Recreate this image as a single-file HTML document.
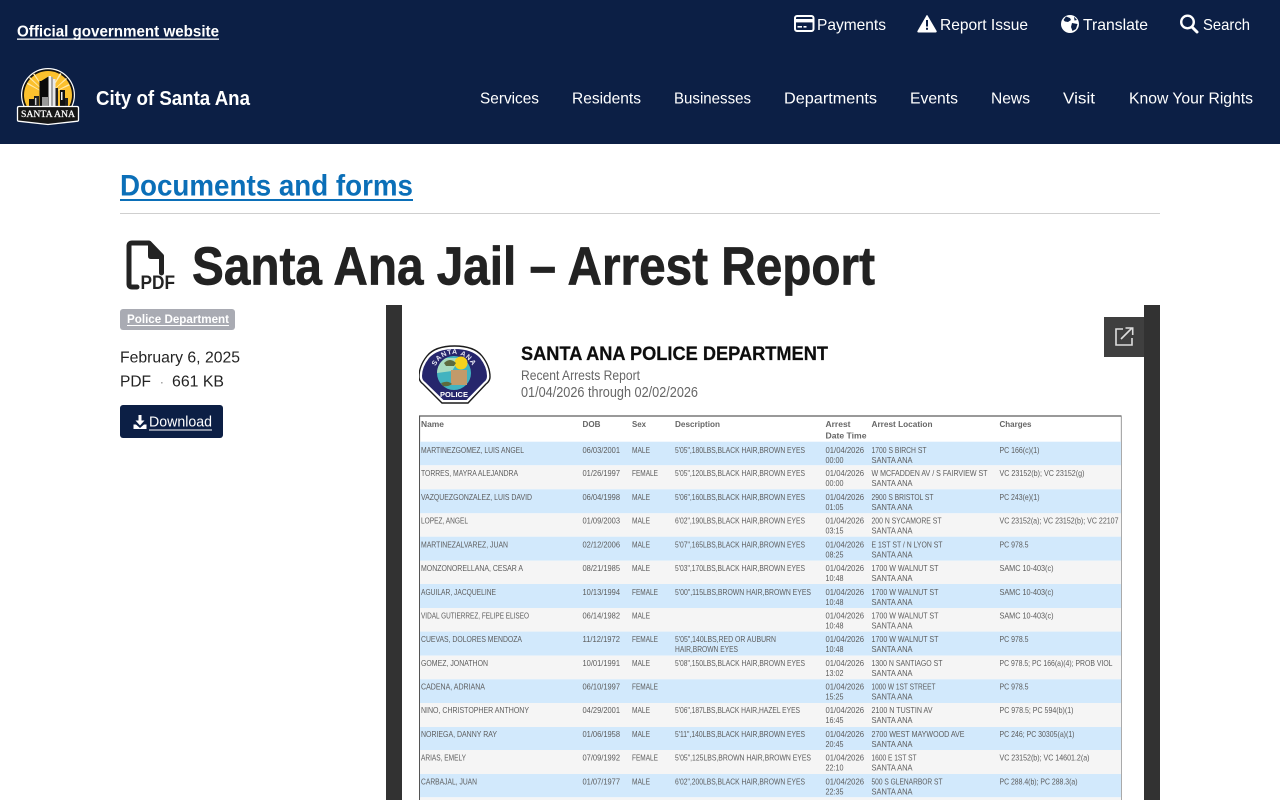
<!DOCTYPE html>
<html lang="en">
<head>
<meta charset="utf-8">
<title>Santa Ana Jail – Arrest Report</title>
<style>
html,body{margin:0;padding:0;background:#fff;width:1280px;height:800px;overflow:hidden}
svg{display:block;position:absolute;left:0;top:0}
text{font-family:"Liberation Sans",sans-serif}
.w{fill:#fff;font-size:16px}
.b{font-weight:700}
.d{fill:#232323;font-size:16px}
#rows text{font-size:8.4px;fill:#5c5c5c}
.h{font-size:8.4px;font-weight:700;fill:#666}
</style>
</head>
<body>
<svg width="1280" height="800" viewBox="0 0 1280 800" xmlns="http://www.w3.org/2000/svg">
<defs>
<filter id="soft" x="0" y="0" width="100%" height="100%"><feGaussianBlur stdDeviation="0.32"/></filter>
<path id="arc" d="M434 374 A20 20 0 0 1 474 374"/>
</defs>

<!-- header -->
<rect x="0" y="0" width="1280" height="144" fill="#0c1f45"/>
<a href="#"><text class="w b" x="17" y="36.5" textLength="202" lengthAdjust="spacingAndGlyphs">Official government website</text></a>
<rect x="17" y="38.5" width="202" height="1.3" fill="#fff"/>

<!-- utility nav -->
<rect x="795" y="16" width="18.5" height="15" rx="2" fill="none" stroke="#fff" stroke-width="2"/>
<rect x="795" y="19" width="18" height="3.4" fill="#fff"/>
<rect x="797.5" y="26" width="4.5" height="1.6" fill="#fff"/><rect x="803.5" y="26" width="3" height="1.6" fill="#fff"/>
<a href="#"><text class="w" x="817" y="30" textLength="69" lengthAdjust="spacingAndGlyphs">Payments</text></a>

<path d="M927 15.5 L936.2 31.2 Q936.4 32 935.5 32 L918.5 32 Q917.6 32 917.9 31.2 Z" fill="#fff" stroke="#fff" stroke-linejoin="round"/>
<rect x="926" y="20" width="2" height="6.5" fill="#0c1f45"/><rect x="926" y="27.8" width="2" height="2" fill="#0c1f45"/>
<a href="#"><text class="w" x="940" y="30" textLength="88" lengthAdjust="spacingAndGlyphs">Report Issue</text></a>

<circle cx="1070" cy="24" r="9" fill="#fff"/>
<path d="M1066 16.5 L1070 18 L1071 20 L1068 22 L1065 21.5 L1063.5 20 Z M1072 23 L1077.5 24 L1076 29 L1072.5 31 L1071 27 Z M1074 16.8 L1077 20 L1074.5 20.5 Z" fill="#0c1f45"/>
<a href="#"><text class="w" x="1083" y="30" textLength="65" lengthAdjust="spacingAndGlyphs">Translate</text></a>

<circle cx="1187.5" cy="22" r="6.3" fill="none" stroke="#fff" stroke-width="2.4"/>
<path d="M1192 27 L1197 32" stroke="#fff" stroke-width="3" stroke-linecap="round"/>
<a href="#"><text class="w" x="1203" y="30" textLength="47" lengthAdjust="spacingAndGlyphs">Search</text></a>

<!-- logo -->
<circle cx="48" cy="95" r="27" fill="#fff"/>
<circle cx="48" cy="95" r="25.8" fill="#111"/>
<circle cx="48" cy="95" r="24" fill="#fbc02d"/>
<path d="M48 95 L33 74 L34.5 73.5 Z M48 95 L60 73 L61.5 74 Z M48 95 L27 84 L27.5 82.5 Z M48 95 L69 84 L69.5 85.5 Z M48 95 L66 78 L67 79 Z M48 95 L29 78 L30 77 Z" fill="#ffe9a8"/>
<rect x="39.5" y="81" width="9" height="26" fill="#0b0b0b"/>
<path d="M39.5 82 L48.5 76.5 L48.5 84 L39.5 84 Z" fill="#0b0b0b"/>
<rect x="48.5" y="76" width="2.5" height="31" fill="#f2f2f2"/>
<rect x="51" y="77" width="2" height="30" fill="#a5a5a5"/>
<rect x="53" y="79" width="2.5" height="28" fill="#e8e8e8"/>
<rect x="55.5" y="88" width="2.5" height="19" fill="#222"/>
<rect x="60" y="90" width="5" height="17" fill="#111"/>
<rect x="61" y="92" width="1.5" height="8" fill="#eee"/>
<rect x="65" y="98" width="3" height="9" fill="#222"/>
<rect x="29" y="99" width="5" height="8" fill="#111"/>
<rect x="34" y="96" width="5" height="11" fill="#222"/>
<rect x="35" y="98" width="1.4" height="7" fill="#ccc"/>
<rect x="42" y="97" width="6" height="10" fill="#999"/>
<path d="M19 106.5 L77 106.5 Q78.5 106.5 78.5 108 L78.5 120 Q78.5 121 77.5 121.2 L48 124.5 L18.5 121.2 Q17.5 121 17.5 120 L17.5 108 Q17.5 106.5 19 106.5 Z" fill="#161616" stroke="#fff" stroke-width="1.3"/>
<text x="48" y="117" text-anchor="middle" textLength="54" lengthAdjust="spacingAndGlyphs" style="font-family:'Liberation Serif',serif;font-size:9.5px;fill:#fff;stroke:#fff;stroke-width:.25px">SANTA ANA</text>
<a href="#"><text class="w b" x="96" y="105" style="font-size:20px" textLength="154" lengthAdjust="spacingAndGlyphs">City of Santa Ana</text></a>

<!-- main nav -->
<a href="#"><text class="w" x="480" y="103.5" textLength="59" lengthAdjust="spacingAndGlyphs">Services</text></a>
<a href="#"><text class="w" x="572" y="103.5" textLength="69" lengthAdjust="spacingAndGlyphs">Residents</text></a>
<a href="#"><text class="w" x="674" y="103.5" textLength="77" lengthAdjust="spacingAndGlyphs">Businesses</text></a>
<a href="#"><text class="w" x="784" y="103.5" textLength="93" lengthAdjust="spacingAndGlyphs">Departments</text></a>
<a href="#"><text class="w" x="910" y="103.5" textLength="48" lengthAdjust="spacingAndGlyphs">Events</text></a>
<a href="#"><text class="w" x="991" y="103.5" textLength="39" lengthAdjust="spacingAndGlyphs">News</text></a>
<a href="#"><text class="w" x="1063" y="103.5" textLength="32" lengthAdjust="spacingAndGlyphs">Visit</text></a>
<a href="#"><text class="w" x="1129" y="103.5" textLength="124" lengthAdjust="spacingAndGlyphs">Know Your Rights</text></a>

<!-- breadcrumb -->
<a href="#"><text x="120" y="195.5" style="font-size:30px;font-weight:700;fill:#0b6fb8" textLength="293" lengthAdjust="spacingAndGlyphs">Documents and forms</text></a>
<rect x="120" y="199" width="293" height="2" fill="#0b6fb8"/>
<rect x="120" y="213" width="1040" height="1" fill="#cfcfcf"/>

<!-- title -->
<path d="M137 287 L132 287 Q129 287 129 284 L129 246 Q129 243 132 243 L149 243 L161.5 256 L161.5 273" fill="none" stroke="#232323" stroke-width="5" stroke-linecap="round" stroke-linejoin="round"/>
<path d="M148 241 L164 257 L164 259 L151 259 Q148 259 148 256 Z" fill="#232323"/>
<text x="140.5" y="289" style="font-size:19.5px;font-weight:700;fill:#232323" textLength="34.5" lengthAdjust="spacingAndGlyphs">PDF</text>
<text x="192" y="284.5" style="font-size:54px;font-weight:700;fill:#222;stroke:#222;stroke-width:.7px" textLength="683" lengthAdjust="spacingAndGlyphs">Santa Ana Jail – Arrest Report</text>

<!-- sidebar -->
<rect x="120" y="309" width="115" height="21" rx="3" fill="#a9abb3"/>
<a href="#"><text x="127" y="323" style="font-size:12px;font-weight:700;fill:#fff" textLength="102" lengthAdjust="spacingAndGlyphs">Police Department</text></a>
<rect x="127" y="325" width="102" height="1" fill="#fff"/>
<text class="d" x="120" y="362.5" textLength="120" lengthAdjust="spacingAndGlyphs">February 6, 2025</text>
<text class="d" x="120" y="386.5" textLength="31" lengthAdjust="spacingAndGlyphs">PDF</text>
<text x="159.5" y="386.5" style="font-size:14px;fill:#999">·</text>
<text class="d" x="172" y="386.5" textLength="52" lengthAdjust="spacingAndGlyphs">661 KB</text>
<rect x="120" y="405" width="103" height="33" rx="3" fill="#0c1f45"/>
<path d="M138.5 415 L141.5 415 L141.5 420.5 L144.5 420.5 L140 425.5 L135.5 420.5 L138.5 420.5 Z" fill="#fff"/>
<path d="M133.5 424.5 L136 424.5 L140 428 L144 424.5 L146.5 424.5 L146.5 429 L133.5 429 Z" fill="#fff"/>
<a href="#"><text x="149" y="426.5" style="font-size:15px;fill:#fff" textLength="63" lengthAdjust="spacingAndGlyphs">Download</text></a>
<rect x="149" y="429.5" width="63" height="1" fill="#fff"/>

<!-- viewer -->
<rect x="386" y="305" width="774" height="495" fill="#323232"/>
<rect x="402" y="305" width="742" height="495" fill="#fff"/>

<g filter="url(#soft)">
<!-- police badge -->
<path d="M454.5 346 Q474 346 482 356 Q490 366 490 377 Q490 381 486 384 L468 403 L442 403 L423 384 Q419 381 419 377 Q419 366 427 356 Q435 346 454.5 346 Z" fill="#fff" stroke="#1a1a1a" stroke-width="1.4"/>
<path d="M454.5 349 Q472 349 480 358 Q487 367 487 376 Q487 380 484 382 L466.5 400 L443.5 400 L425 382 Q422 380 422 376 Q422 367 429 358 Q437 349 454.5 349 Z" fill="#28286c"/>
<circle cx="454" cy="373" r="17" fill="#43b3c0"/>
<path d="M437 373 A17 17 0 0 1 446 358 L460 358 L452 371 Z" fill="#a8dbc0"/>
<circle cx="461" cy="363" r="6.5" fill="#f6d21f"/>
<rect x="451" y="370" width="16" height="15" fill="#c29a6b"/>
<path d="M444 363 Q450 357 456 363 L454 366 L446 366 Z" fill="#5d6a3c"/>
<path d="M441 383 Q448 380 452 384 Q448 387 443 386 Z" fill="#5d6a3c"/>
<text text-anchor="middle" style="font-size:7px;font-weight:700;fill:#e8e8f4;letter-spacing:.7px"><textPath href="#arc" startOffset="50%">SANTA ANA</textPath></text>
<text x="440" y="397" style="font-size:7.5px;font-weight:700;fill:#fff" textLength="28" lengthAdjust="spacingAndGlyphs">POLICE</text>

<text x="521" y="360" style="font-size:19px;font-weight:700;fill:#111;stroke:#111;stroke-width:.25px" textLength="307" lengthAdjust="spacingAndGlyphs">SANTA ANA POLICE DEPARTMENT</text>
<text x="521" y="380" style="font-size:14px;fill:#666" textLength="119" lengthAdjust="spacingAndGlyphs">Recent Arrests Report</text>
<text x="521" y="397" style="font-size:14.5px;fill:#666" textLength="177" lengthAdjust="spacingAndGlyphs">01/04/2026 through 02/02/2026</text>

<!-- table -->
<rect x="419.5" y="416" width="702" height="390" fill="#fff" stroke="#555" stroke-width="1.2"/>
<text class="h" x="421" y="427" textLength="23" lengthAdjust="spacingAndGlyphs">Name</text>
<text class="h" x="582.5" y="427" textLength="18" lengthAdjust="spacingAndGlyphs">DOB</text>
<text class="h" x="632" y="427" textLength="14" lengthAdjust="spacingAndGlyphs">Sex</text>
<text class="h" x="675" y="427" textLength="45" lengthAdjust="spacingAndGlyphs">Description</text>
<text class="h" x="825.5" y="427" textLength="25" lengthAdjust="spacingAndGlyphs">Arrest</text>
<text class="h" x="825.5" y="438.5" textLength="41" lengthAdjust="spacingAndGlyphs">Date Time</text>
<text class="h" x="871.5" y="427" textLength="61" lengthAdjust="spacingAndGlyphs">Arrest Location</text>
<text class="h" x="999.5" y="427" textLength="32" lengthAdjust="spacingAndGlyphs">Charges</text>

<g id="rows">
<rect x="420" y="441.7" width="701" height="23.6" fill="#d2e9fc"/>
<rect x="420" y="465.3" width="701" height="24" fill="#f5f5f5"/>
<rect x="420" y="489.3" width="701" height="24" fill="#d2e9fc"/>
<rect x="420" y="513.3" width="701" height="23.4" fill="#f5f5f5"/>
<rect x="420" y="536.7" width="701" height="24" fill="#d2e9fc"/>
<rect x="420" y="560.7" width="701" height="23.3" fill="#f5f5f5"/>
<rect x="420" y="584" width="701" height="24" fill="#d2e9fc"/>
<rect x="420" y="608" width="701" height="23.6" fill="#f5f5f5"/>
<rect x="420" y="631.6" width="701" height="24" fill="#d2e9fc"/>
<rect x="420" y="655.6" width="701" height="23.7" fill="#f5f5f5"/>
<rect x="420" y="679.3" width="701" height="23.7" fill="#d2e9fc"/>
<rect x="420" y="703" width="701" height="24" fill="#f5f5f5"/>
<rect x="420" y="727" width="701" height="23" fill="#d2e9fc"/>
<rect x="420" y="750" width="701" height="24" fill="#f5f5f5"/>
<rect x="420" y="774" width="701" height="23.3" fill="#d2e9fc"/>
<rect x="420" y="797.3" width="701" height="3" fill="#f5f5f5"/>

<g transform="translate(0,453)">
<text x="421" textLength="103" lengthAdjust="spacingAndGlyphs">MARTINEZGOMEZ, LUIS ANGEL</text><text x="582.5" textLength="37.5" lengthAdjust="spacingAndGlyphs">06/03/2001</text><text x="632" textLength="18" lengthAdjust="spacingAndGlyphs">MALE</text><text x="675" textLength="130" lengthAdjust="spacingAndGlyphs">5'05",180LBS,BLACK HAIR,BROWN EYES</text><text x="825.5" textLength="38.5" lengthAdjust="spacingAndGlyphs">01/04/2026</text><text x="825.5" y="10" textLength="18" lengthAdjust="spacingAndGlyphs">00:00</text><text x="871.5" textLength="55" lengthAdjust="spacingAndGlyphs">1700 S BIRCH ST</text><text x="871.5" y="10" textLength="41" lengthAdjust="spacingAndGlyphs">SANTA ANA</text><text x="999.5" textLength="40" lengthAdjust="spacingAndGlyphs">PC 166(c)(1)</text>
</g>
<g transform="translate(0,476)">
<text x="421" textLength="97" lengthAdjust="spacingAndGlyphs">TORRES, MAYRA ALEJANDRA</text><text x="582.5" textLength="37.5" lengthAdjust="spacingAndGlyphs">01/26/1997</text><text x="632" textLength="26" lengthAdjust="spacingAndGlyphs">FEMALE</text><text x="675" textLength="130" lengthAdjust="spacingAndGlyphs">5'05",120LBS,BLACK HAIR,BROWN EYES</text><text x="825.5" textLength="38.5" lengthAdjust="spacingAndGlyphs">01/04/2026</text><text x="825.5" y="10" textLength="18" lengthAdjust="spacingAndGlyphs">00:00</text><text x="871.5" textLength="116" lengthAdjust="spacingAndGlyphs">W MCFADDEN AV / S FAIRVIEW ST</text><text x="871.5" y="10" textLength="41" lengthAdjust="spacingAndGlyphs">SANTA ANA</text><text x="999.5" textLength="85" lengthAdjust="spacingAndGlyphs">VC 23152(b); VC 23152(g)</text>
</g>
<g transform="translate(0,500)">
<text x="421" textLength="111" lengthAdjust="spacingAndGlyphs">VAZQUEZGONZALEZ, LUIS DAVID</text><text x="582.5" textLength="37.5" lengthAdjust="spacingAndGlyphs">06/04/1998</text><text x="632" textLength="18" lengthAdjust="spacingAndGlyphs">MALE</text><text x="675" textLength="130" lengthAdjust="spacingAndGlyphs">5'06",160LBS,BLACK HAIR,BROWN EYES</text><text x="825.5" textLength="38.5" lengthAdjust="spacingAndGlyphs">01/04/2026</text><text x="825.5" y="10" textLength="18" lengthAdjust="spacingAndGlyphs">01:05</text><text x="871.5" textLength="62" lengthAdjust="spacingAndGlyphs">2900 S BRISTOL ST</text><text x="871.5" y="10" textLength="41" lengthAdjust="spacingAndGlyphs">SANTA ANA</text><text x="999.5" textLength="40" lengthAdjust="spacingAndGlyphs">PC 243(e)(1)</text>
</g>
<g transform="translate(0,523.5)">
<text x="421" textLength="47" lengthAdjust="spacingAndGlyphs">LOPEZ, ANGEL</text><text x="582.5" textLength="37.5" lengthAdjust="spacingAndGlyphs">01/09/2003</text><text x="632" textLength="18" lengthAdjust="spacingAndGlyphs">MALE</text><text x="675" textLength="130" lengthAdjust="spacingAndGlyphs">6'02",190LBS,BLACK HAIR,BROWN EYES</text><text x="825.5" textLength="38.5" lengthAdjust="spacingAndGlyphs">01/04/2026</text><text x="825.5" y="10" textLength="18" lengthAdjust="spacingAndGlyphs">03:15</text><text x="871.5" textLength="70" lengthAdjust="spacingAndGlyphs">200 N SYCAMORE ST</text><text x="871.5" y="10" textLength="41" lengthAdjust="spacingAndGlyphs">SANTA ANA</text><text x="999.5" textLength="119" lengthAdjust="spacingAndGlyphs">VC 23152(a); VC 23152(b); VC 22107</text>
</g>
<g transform="translate(0,547.5)">
<text x="421" textLength="87" lengthAdjust="spacingAndGlyphs">MARTINEZALVAREZ, JUAN</text><text x="582.5" textLength="37.5" lengthAdjust="spacingAndGlyphs">02/12/2006</text><text x="632" textLength="18" lengthAdjust="spacingAndGlyphs">MALE</text><text x="675" textLength="130" lengthAdjust="spacingAndGlyphs">5'07",165LBS,BLACK HAIR,BROWN EYES</text><text x="825.5" textLength="38.5" lengthAdjust="spacingAndGlyphs">01/04/2026</text><text x="825.5" y="10" textLength="18" lengthAdjust="spacingAndGlyphs">08:25</text><text x="871.5" textLength="71" lengthAdjust="spacingAndGlyphs">E 1ST ST / N LYON ST</text><text x="871.5" y="10" textLength="41" lengthAdjust="spacingAndGlyphs">SANTA ANA</text><text x="999.5" textLength="29" lengthAdjust="spacingAndGlyphs">PC 978.5</text>
</g>
<g transform="translate(0,571)">
<text x="421" textLength="102" lengthAdjust="spacingAndGlyphs">MONZONORELLANA, CESAR A</text><text x="582.5" textLength="37.5" lengthAdjust="spacingAndGlyphs">08/21/1985</text><text x="632" textLength="18" lengthAdjust="spacingAndGlyphs">MALE</text><text x="675" textLength="130" lengthAdjust="spacingAndGlyphs">5'03",170LBS,BLACK HAIR,BROWN EYES</text><text x="825.5" textLength="38.5" lengthAdjust="spacingAndGlyphs">01/04/2026</text><text x="825.5" y="10" textLength="18" lengthAdjust="spacingAndGlyphs">10:48</text><text x="871.5" textLength="67" lengthAdjust="spacingAndGlyphs">1700 W WALNUT ST</text><text x="871.5" y="10" textLength="41" lengthAdjust="spacingAndGlyphs">SANTA ANA</text><text x="999.5" textLength="54" lengthAdjust="spacingAndGlyphs">SAMC 10-403(c)</text>
</g>
<g transform="translate(0,595)">
<text x="421" textLength="75" lengthAdjust="spacingAndGlyphs">AGUILAR, JACQUELINE</text><text x="582.5" textLength="37.5" lengthAdjust="spacingAndGlyphs">10/13/1994</text><text x="632" textLength="26" lengthAdjust="spacingAndGlyphs">FEMALE</text><text x="675" textLength="136" lengthAdjust="spacingAndGlyphs">5'00",115LBS,BROWN HAIR,BROWN EYES</text><text x="825.5" textLength="38.5" lengthAdjust="spacingAndGlyphs">01/04/2026</text><text x="825.5" y="10" textLength="18" lengthAdjust="spacingAndGlyphs">10:48</text><text x="871.5" textLength="67" lengthAdjust="spacingAndGlyphs">1700 W WALNUT ST</text><text x="871.5" y="10" textLength="41" lengthAdjust="spacingAndGlyphs">SANTA ANA</text><text x="999.5" textLength="54" lengthAdjust="spacingAndGlyphs">SAMC 10-403(c)</text>
</g>
<g transform="translate(0,618.5)">
<text x="421" textLength="108" lengthAdjust="spacingAndGlyphs">VIDAL GUTIERREZ, FELIPE ELISEO</text><text x="582.5" textLength="37.5" lengthAdjust="spacingAndGlyphs">06/14/1982</text><text x="632" textLength="18" lengthAdjust="spacingAndGlyphs">MALE</text><text x="825.5" textLength="38.5" lengthAdjust="spacingAndGlyphs">01/04/2026</text><text x="825.5" y="10" textLength="18" lengthAdjust="spacingAndGlyphs">10:48</text><text x="871.5" textLength="67" lengthAdjust="spacingAndGlyphs">1700 W WALNUT ST</text><text x="871.5" y="10" textLength="41" lengthAdjust="spacingAndGlyphs">SANTA ANA</text><text x="999.5" textLength="54" lengthAdjust="spacingAndGlyphs">SAMC 10-403(c)</text>
</g>
<g transform="translate(0,642)">
<text x="421" textLength="101" lengthAdjust="spacingAndGlyphs">CUEVAS, DOLORES MENDOZA</text><text x="582.5" textLength="37.5" lengthAdjust="spacingAndGlyphs">11/12/1972</text><text x="632" textLength="26" lengthAdjust="spacingAndGlyphs">FEMALE</text><text x="675" textLength="101" lengthAdjust="spacingAndGlyphs">5'05",140LBS,RED OR AUBURN</text><text x="675" y="10" textLength="63" lengthAdjust="spacingAndGlyphs">HAIR,BROWN EYES</text><text x="825.5" textLength="38.5" lengthAdjust="spacingAndGlyphs">01/04/2026</text><text x="825.5" y="10" textLength="18" lengthAdjust="spacingAndGlyphs">10:48</text><text x="871.5" textLength="67" lengthAdjust="spacingAndGlyphs">1700 W WALNUT ST</text><text x="871.5" y="10" textLength="41" lengthAdjust="spacingAndGlyphs">SANTA ANA</text><text x="999.5" textLength="29" lengthAdjust="spacingAndGlyphs">PC 978.5</text>
</g>
<g transform="translate(0,666)">
<text x="421" textLength="67" lengthAdjust="spacingAndGlyphs">GOMEZ, JONATHON</text><text x="582.5" textLength="37.5" lengthAdjust="spacingAndGlyphs">10/01/1991</text><text x="632" textLength="18" lengthAdjust="spacingAndGlyphs">MALE</text><text x="675" textLength="130" lengthAdjust="spacingAndGlyphs">5'08",150LBS,BLACK HAIR,BROWN EYES</text><text x="825.5" textLength="38.5" lengthAdjust="spacingAndGlyphs">01/04/2026</text><text x="825.5" y="10" textLength="18" lengthAdjust="spacingAndGlyphs">13:02</text><text x="871.5" textLength="71" lengthAdjust="spacingAndGlyphs">1300 N SANTIAGO ST</text><text x="871.5" y="10" textLength="41" lengthAdjust="spacingAndGlyphs">SANTA ANA</text><text x="999.5" textLength="113" lengthAdjust="spacingAndGlyphs">PC 978.5; PC 166(a)(4); PROB VIOL</text>
</g>
<g transform="translate(0,689.5)">
<text x="421" textLength="64" lengthAdjust="spacingAndGlyphs">CADENA, ADRIANA</text><text x="582.5" textLength="37.5" lengthAdjust="spacingAndGlyphs">06/10/1997</text><text x="632" textLength="26" lengthAdjust="spacingAndGlyphs">FEMALE</text><text x="825.5" textLength="38.5" lengthAdjust="spacingAndGlyphs">01/04/2026</text><text x="825.5" y="10" textLength="18" lengthAdjust="spacingAndGlyphs">15:25</text><text x="871.5" textLength="64" lengthAdjust="spacingAndGlyphs">1000 W 1ST STREET</text><text x="871.5" y="10" textLength="41" lengthAdjust="spacingAndGlyphs">SANTA ANA</text><text x="999.5" textLength="29" lengthAdjust="spacingAndGlyphs">PC 978.5</text>
</g>
<g transform="translate(0,713)">
<text x="421" textLength="108" lengthAdjust="spacingAndGlyphs">NINO, CHRISTOPHER ANTHONY</text><text x="582.5" textLength="37.5" lengthAdjust="spacingAndGlyphs">04/29/2001</text><text x="632" textLength="18" lengthAdjust="spacingAndGlyphs">MALE</text><text x="675" textLength="125" lengthAdjust="spacingAndGlyphs">5'06",187LBS,BLACK HAIR,HAZEL EYES</text><text x="825.5" textLength="38.5" lengthAdjust="spacingAndGlyphs">01/04/2026</text><text x="825.5" y="10" textLength="18" lengthAdjust="spacingAndGlyphs">16:45</text><text x="871.5" textLength="61" lengthAdjust="spacingAndGlyphs">2100 N TUSTIN AV</text><text x="871.5" y="10" textLength="41" lengthAdjust="spacingAndGlyphs">SANTA ANA</text><text x="999.5" textLength="74" lengthAdjust="spacingAndGlyphs">PC 978.5; PC 594(b)(1)</text>
</g>
<g transform="translate(0,737)">
<text x="421" textLength="76" lengthAdjust="spacingAndGlyphs">NORIEGA, DANNY RAY</text><text x="582.5" textLength="37.5" lengthAdjust="spacingAndGlyphs">01/06/1958</text><text x="632" textLength="18" lengthAdjust="spacingAndGlyphs">MALE</text><text x="675" textLength="130" lengthAdjust="spacingAndGlyphs">5'11",140LBS,BLACK HAIR,BROWN EYES</text><text x="825.5" textLength="38.5" lengthAdjust="spacingAndGlyphs">01/04/2026</text><text x="825.5" y="10" textLength="18" lengthAdjust="spacingAndGlyphs">20:45</text><text x="871.5" textLength="93" lengthAdjust="spacingAndGlyphs">2700 WEST MAYWOOD AVE</text><text x="871.5" y="10" textLength="41" lengthAdjust="spacingAndGlyphs">SANTA ANA</text><text x="999.5" textLength="75" lengthAdjust="spacingAndGlyphs">PC 246; PC 30305(a)(1)</text>
</g>
<g transform="translate(0,760.5)">
<text x="421" textLength="45" lengthAdjust="spacingAndGlyphs">ARIAS, EMELY</text><text x="582.5" textLength="37.5" lengthAdjust="spacingAndGlyphs">07/09/1992</text><text x="632" textLength="26" lengthAdjust="spacingAndGlyphs">FEMALE</text><text x="675" textLength="136" lengthAdjust="spacingAndGlyphs">5'05",125LBS,BROWN HAIR,BROWN EYES</text><text x="825.5" textLength="38.5" lengthAdjust="spacingAndGlyphs">01/04/2026</text><text x="825.5" y="10" textLength="18" lengthAdjust="spacingAndGlyphs">22:10</text><text x="871.5" textLength="45" lengthAdjust="spacingAndGlyphs">1600 E 1ST ST</text><text x="871.5" y="10" textLength="41" lengthAdjust="spacingAndGlyphs">SANTA ANA</text><text x="999.5" textLength="90" lengthAdjust="spacingAndGlyphs">VC 23152(b); VC 14601.2(a)</text>
</g>
<g transform="translate(0,784.5)">
<text x="421" textLength="56" lengthAdjust="spacingAndGlyphs">CARBAJAL, JUAN</text><text x="582.5" textLength="37.5" lengthAdjust="spacingAndGlyphs">01/07/1977</text><text x="632" textLength="18" lengthAdjust="spacingAndGlyphs">MALE</text><text x="675" textLength="130" lengthAdjust="spacingAndGlyphs">6'02",200LBS,BLACK HAIR,BROWN EYES</text><text x="825.5" textLength="38.5" lengthAdjust="spacingAndGlyphs">01/04/2026</text><text x="825.5" y="10" textLength="18" lengthAdjust="spacingAndGlyphs">22:35</text><text x="871.5" textLength="71" lengthAdjust="spacingAndGlyphs">500 S GLENARBOR ST</text><text x="871.5" y="10" textLength="41" lengthAdjust="spacingAndGlyphs">SANTA ANA</text><text x="999.5" textLength="78" lengthAdjust="spacingAndGlyphs">PC 288.4(b); PC 288.3(a)</text>
</g>
</g>
</g>

<!-- open in new window -->
<rect x="1104" y="317" width="40" height="40" fill="#3f3f3f"/>
<path d="M1123 329 L1116 329 L1116 345 L1132 345 L1132 338" fill="none" stroke="#ddd" stroke-width="1.6"/>
<path d="M1121 339 L1132 328 M1125.5 328 L1132.7 328 L1132.7 335" fill="none" stroke="#ddd" stroke-width="1.6"/>
</svg>
</body>
</html>
